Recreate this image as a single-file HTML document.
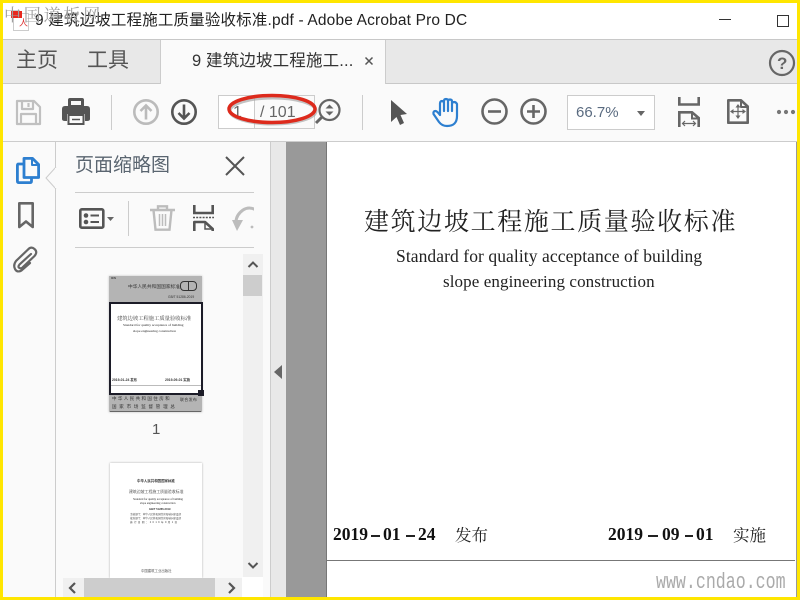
<!DOCTYPE html>
<html><head><meta charset="utf-8"><style>
html,body{margin:0;padding:0}
body{width:800px;height:600px;position:relative;overflow:hidden;background:#fff;font-family:"Liberation Sans","Noto Sans CJK SC",sans-serif;color:#333}
.a{position:absolute}
.t{position:absolute;white-space:nowrap;line-height:1}
svg{position:absolute;overflow:visible}
.serif{font-family:"Liberation Serif","Noto Serif CJK SC",serif;color:#222}
.song{font-family:"Noto Serif CJK SC","Liberation Serif",serif}
.bl{filter:blur(.35px)}
.d{position:absolute;top:526px;font:bold 17.5px/1 "Liberation Serif",serif;color:#111;white-space:nowrap}
.dash{position:absolute;height:2px;background:#222;top:535px}
</style></head><body>

<!-- title bar -->
<div class="t" style="left:35px;top:13px;font-size:15.5px;color:#222;letter-spacing:.16px">9 建筑边坡工程施工质量验收标准.pdf - Adobe Acrobat Pro DC</div>
<div class="a" style="left:13px;top:13px;width:14px;height:16px;background:#fff;border:1px solid #ccc"></div>
<div class="a" style="left:11px;top:11px;width:11px;height:7px;background:#e8281e"></div>
<div class="t" style="left:19px;top:19px;font-size:9px;color:#d33">人</div>
<div class="t song" style="left:4px;top:5px;font-size:17px;color:#a0a0a0;letter-spacing:2.800px">中国道板网</div>
<div class="a" style="left:719px;top:19px;width:12px;height:1px;background:#333"></div>
<div class="a" style="left:777px;top:15px;width:10px;height:10px;border:1px solid #333"></div>

<!-- tab bar -->
<div class="a" style="left:0;top:39px;width:800px;height:45px;background:#e8e8e8;border-top:1px solid #c8c8c8;border-bottom:1px solid #c8c8c8;box-sizing:border-box"></div>
<div class="a" style="left:160px;top:40px;width:226px;height:44px;background:#fafafa;border-left:1px solid #ccc;border-right:1px solid #ccc;box-sizing:border-box"></div>
<div class="t" style="left:16px;top:50px;font-size:21px;color:#555">主页</div>
<div class="t" style="left:87px;top:50px;font-size:21px;color:#555">工具</div>
<div class="t" style="left:192px;top:53px;font-size:16.500px;color:#333;letter-spacing:.15px">9 建筑边坡工程施工...</div>
<svg style="left:364px;top:56px" width="10" height="10"><path d="M1.500 1.500L8.500 8.500M8.500 1.500L1.500 8.500" stroke="#555" stroke-width="1.500"/></svg>
<svg style="left:769px;top:50px" width="26" height="26"><circle cx="13" cy="13" r="12" fill="none" stroke="#666" stroke-width="2.200"/></svg>
<div class="t" style="left:777px;top:55px;font-size:17px;font-weight:bold;color:#666">?</div>

<!-- toolbar -->
<div class="a" style="left:0;top:84px;width:800px;height:57px;background:#fafafa"></div>
<div class="a" style="left:0;top:141px;width:800px;height:1px;background:#ccc"></div>
<svg style="left:16px;top:100px" width="25" height="25" fill="none" stroke="#c0c0c0" stroke-width="2.200" stroke-linejoin="round"><path d="M1 1H18L24 7V24H1Z"/><path d="M6 1V9H17V1M12.500 3V7M5 24V14H20V24"/></svg>
<svg style="left:62px;top:98px" width="28" height="27"><path d="M6 8V2Q6 0 8 0H20Q22 0 22 2V8Z" fill="#555"/><path d="M3 8H25Q28 8 28 11V21Q28 23 25 23H23V16H5V23H3Q0 23 0 21V11Q0 8 3 8Z" fill="#555"/><path d="M6.500 17H21.500V26H6.500Z" fill="#fafafa" stroke="#555" stroke-width="2"/><path d="M10 21.500H18" stroke="#555" stroke-width="1.500"/><path d="M9 3H19V7H9Z" fill="#fafafa"/></svg>
<div class="a" style="left:111px;top:95px;width:1px;height:35px;background:#ccc"></div>
<svg style="left:133px;top:99px" width="26" height="26" fill="none" stroke="#bbb" stroke-width="2.600"><circle cx="13" cy="13" r="11.700"/><path d="M13 20.500V6.500M7.500 12L13 6.500L18.500 12"/></svg>
<svg style="left:171px;top:99px" width="26" height="26" fill="none" stroke="#555" stroke-width="2.600"><circle cx="13" cy="13" r="11.700"/><path d="M13 5.500V19.500M7.500 14L13 19.500L18.500 14"/></svg>
<div class="a" style="left:218px;top:95px;width:37px;height:34px;background:#fff;border:1px solid #ccc;box-sizing:border-box"></div>
<div class="a" style="left:255px;top:95px;width:60px;height:34px;background:#fafafa;border:1px solid #ccc;border-left:0;box-sizing:border-box"></div>
<div class="t" style="left:233px;top:105px;font-size:16px;color:#666">1</div>
<div class="t" style="left:260px;top:105px;font-size:16px;color:#666">/ 101</div>
<svg style="left:225px;top:88px" width="95" height="40"><ellipse cx="48" cy="23" rx="43" ry="13" fill="none" stroke="#aaa" stroke-width="3" opacity=".7"/><ellipse cx="47" cy="21" rx="43" ry="13.500" fill="none" stroke="#dd2a1c" stroke-width="3.500"/></svg>
<svg style="left:314px;top:98px" width="28" height="28"><circle cx="15.500" cy="12" r="10" fill="none" stroke="#666" stroke-width="2.200"/><path d="M11.500 10.500L15.500 6.500L19.500 10.500ZM11.500 13.500L15.500 17.500L19.500 13.500Z" fill="#666"/><path d="M8 19L2 25" stroke="#666" stroke-width="3"/></svg>
<div class="a" style="left:362px;top:95px;width:1px;height:35px;background:#ccc"></div>
<svg style="left:390px;top:100px" width="18" height="26"><path d="M1 0L17 14L10.500 15L14 23L10 25L6.500 17L1 22Z" fill="#555"/></svg>
<svg style="left:432px;top:98px" width="28" height="30" fill="none" stroke="#2d7fd0" stroke-width="2.200" stroke-linejoin="round" stroke-linecap="round"><path d="M8 17V5.500Q8 3 10 3T12 5.500V13M12 13V3Q12 1 14 1T16 3V13M16 13V3.500Q16 1.500 18 1.500T20 3.500V13M20 13V6Q20 4 22 4T25 6V18Q25 28 15 28Q10 28 7 24L1.500 16Q1 13 3.500 13Q5 13 8 17"/></svg>
<svg style="left:481px;top:98px" width="27" height="27" fill="none" stroke="#666" stroke-width="2.600"><circle cx="13.500" cy="13.500" r="12"/><path d="M7 13.500H20"/></svg>
<svg style="left:520px;top:98px" width="27" height="27" fill="none" stroke="#666" stroke-width="2.600"><circle cx="13.500" cy="13.500" r="12"/><path d="M7 13.500H20M13.500 7V20"/></svg>
<div class="a" style="left:567px;top:95px;width:88px;height:35px;background:#fff;border:1px solid #ccc;box-sizing:border-box"></div>
<div class="t" style="left:576px;top:105px;font-size:15px;color:#5a6b80">66.7%</div>
<div class="a" style="left:637px;top:111px;border-left:4px solid transparent;border-right:4px solid transparent;border-top:5px solid #666"></div>
<svg style="left:678px;top:97px" width="22" height="30" fill="none" stroke="#666" stroke-width="2.600"><path d="M1.300 0V7.500H20.700V0"/><path d="M1.300 30V15.300H14L20.700 21V30"/><path d="M14 16V21.500H20" stroke-width="2"/><path d="M4.500 26.500H17.500M7 24L4.500 26.500L7 29M15 24L17.500 26.500L15 29" stroke-width="1.200"/></svg>
<svg style="left:727px;top:99px" width="22" height="25" fill="none" stroke="#666" stroke-width="2.600" stroke-linejoin="round"><path d="M1.300 1.300H14L20.700 7.500V23.700H1.300Z"/><path d="M14 2V8H20" stroke-width="2"/><path d="M11 7V18M5.500 12.500H16.500" stroke-width="1.200"/><path d="M8.500 8.500L11 5L13.500 8.500ZM8.500 16.500L11 20L13.500 16.500ZM6.500 10L3 12.500L6.500 15ZM15.500 10L19 12.500L15.500 15Z" fill="#666" stroke="none"/></svg>
<svg style="left:776px;top:109px" width="20" height="6"><circle cx="3" cy="3" r="2.100" fill="#777"/><circle cx="10" cy="3" r="2.100" fill="#777"/><circle cx="17" cy="3" r="2.100" fill="#777"/></svg>

<!-- left rail + panel -->
<div class="a" style="left:0;top:142px;width:270px;height:458px;background:#fafafa"></div>
<div class="a" style="left:55px;top:142px;width:1px;height:458px;background:#ccc"></div>
<svg style="left:45px;top:167px" width="12" height="22"><path d="M11 0L1 11L11 22" fill="#fafafa" stroke="#ccc"/><path d="M11 1V21" stroke="#fafafa" stroke-width="2"/></svg>
<svg style="left:16px;top:157px" width="24" height="27" fill="none" stroke="#2d7fd0" stroke-width="2.800" stroke-linejoin="round"><path d="M8 1.400H16.500L22.600 7.500V20.500H8Z"/><path d="M16 2V8H22" stroke-width="2"/><path d="M7 7H2.500Q1.400 7 1.400 8.500V24Q1.400 25.600 3 25.600H14Q15.500 25.600 15.500 24V21"/></svg>
<svg style="left:18px;top:202px" width="16" height="27" fill="none" stroke="#666" stroke-width="2.600" stroke-linejoin="round"><path d="M1.300 1.300H14.700V25L8 19.500L1.300 25Z"/></svg>
<svg style="left:13px;top:247px" width="25" height="25" fill="none" stroke="#666" stroke-width="2.200" stroke-linecap="round"><path d="M18 7L6.500 17.500Q4.500 20 6.500 21T10 20L21.500 9Q25 5 21.500 2T15 2.500L3 14Q0 18 2 22T8.500 23.500L17 16"/></svg>

<div class="t" style="left:75px;top:156px;font-size:19px;color:#5a6570">页面缩略图</div>
<svg style="left:225px;top:156px" width="20" height="20"><path d="M1 1L19 19M19 1L1 19" stroke="#555" stroke-width="2"/></svg>
<div class="a" style="left:75px;top:192px;width:179px;height:1px;background:#ccc"></div>
<svg style="left:79px;top:208px" width="35" height="21"><rect x="1.300" y="1.300" width="23" height="18.400" rx="1.500" fill="none" stroke="#555" stroke-width="2.600"/><circle cx="7" cy="7.500" r="2.300" fill="#555"/><circle cx="7" cy="14" r="2.300" fill="#555"/><path d="M11.500 7.500H20M11.500 14H20" stroke="#555" stroke-width="2"/><path d="M28 9H35L31.500 13Z" fill="#666"/></svg>
<div class="a" style="left:128px;top:201px;width:1px;height:35px;background:#ccc"></div>
<svg style="left:150px;top:205px" width="25" height="26" fill="none" stroke="#bcbcbc" stroke-width="2.400"><path d="M0 5H25M8 5V1.300H17V5"/><path d="M3.500 5L5.500 24.700H19.500L21.500 5"/><path d="M9.500 9V21M12.500 9V21M15.500 9V21" stroke-width="1.500"/></svg>
<svg style="left:193px;top:205px" width="21" height="26" fill="none" stroke="#555" stroke-width="2.600"><path d="M1.300 0V8H19.700V0"/><path d="M1.300 26V17H12L19.700 24V26" stroke-linejoin="round"/><path d="M12 17.500V24H19" stroke-width="1.500"/><path d="M0 12.500H21" stroke-width="1.600" stroke-dasharray="2 1.200"/></svg>
<svg style="left:233px;top:207px" width="24" height="25" fill="none" stroke="#bcbcbc" stroke-width="3"><path d="M23 3Q16 -1 10 3Q3 8 3 15"/><path d="M-1 13H10L4 24Z" fill="#bcbcbc" stroke="none"/><circle cx="19" cy="20" r="1.400" fill="#bcbcbc" stroke="none"/></svg>
<div class="a" style="left:254px;top:200px;width:8px;height:36px;background:#fafafa"></div>
<div class="a" style="left:75px;top:247px;width:179px;height:1px;background:#ccc"></div>

<!-- thumbnail 1 -->
<div class="a" style="left:109px;top:276px;width:93px;height:136px;background:#b4b4b4;box-shadow:0 0 2px #bbb"></div>
<div class="a" style="left:109px;top:302px;width:94px;height:93px;background:#fff;border:2px solid #1c1c28;box-sizing:border-box"></div>
<div class="a" style="left:198px;top:390px;width:6px;height:6px;background:#1c1c28"></div>
<div class="a" style="left:110px;top:411px;width:91px;height:1px;background:#666"></div>
<div class="bl">
<div class="t" style="left:111px;top:277px;font-size:3px;color:#333;font-weight:bold">ICS</div>
<div class="t" style="left:128px;top:285px;font-size:4.700px;color:#333;letter-spacing:.04px">中华人民共和国国家标准</div>
<div class="a" style="left:180px;top:281px;width:17px;height:10px;border:1.500px solid #333;border-radius:4px;box-sizing:border-box"></div>
<div class="a" style="left:188px;top:281px;width:1px;height:10px;background:#333"></div>
<div class="t" style="left:168px;top:296px;font-size:3.300px;color:#333">GB/T 51286-2019</div>
<div class="t song" style="left:117px;top:316px;font-size:5.300px;color:#333">建筑边坡工程施工质量验收标准</div>
<div class="t serif" style="left:123px;top:324px;font-size:3.500px">Standard for quality acceptance of building</div>
<div class="t serif" style="left:133px;top:330px;font-size:3.500px">slope engineering construction</div>
<div class="t" style="left:112px;top:379px;font-size:3.400px;font-weight:bold;color:#333">2019-01-24 发布</div>
<div class="t" style="left:165px;top:379px;font-size:3.400px;font-weight:bold;color:#333">2019-09-01 实施</div>
<div class="a" style="left:111px;top:385px;width:90px;height:1px;background:#bbb"></div>
<div class="t" style="left:112px;top:396.500px;font-size:4.500px;color:#333;letter-spacing:1.400px">中华人民共和国住房和</div>
<div class="t" style="left:112px;top:404.500px;font-size:4.500px;color:#333;letter-spacing:2.800px">国家市场监督管理总</div>
<div class="t" style="left:180px;top:398px;font-size:4px;color:#333;letter-spacing:.3px">联合发布</div>
</div>
<div class="t" style="left:152px;top:422px;font-size:15px;color:#555">1</div>

<!-- thumbnail 2 -->
<div class="a" style="left:110px;top:463px;width:92px;height:115px;background:#fff;box-shadow:0 0 2px #aaa"></div>
<div class="bl">
<div class="t" style="left:137px;top:480px;font-size:3.450px;color:#333;font-weight:bold">中华人民共和国国家标准</div>
<div class="t" style="left:129px;top:490px;font-size:3.900px;color:#555">建筑边坡工程施工质量验收标准</div>
<div class="t serif" style="left:133px;top:497.500px;font-size:2.900px">Standard for quality acceptance of building</div>
<div class="t serif" style="left:140px;top:502px;font-size:2.900px">slope engineering construction</div>
<div class="t" style="left:149px;top:508.500px;font-size:2.700px;font-weight:bold;color:#333">GB/T 51286-2019</div>
<div class="t" style="left:130px;top:513.500px;font-size:2.550px;color:#444">主编部门：中华人民共和国住房和城乡建设部</div>
<div class="t" style="left:130px;top:518px;font-size:2.550px;color:#444">批准部门：中华人民共和国住房和城乡建设部</div>
<div class="t" style="left:130px;top:522px;font-size:2.550px;color:#444;letter-spacing:1.400px">施行日期：2019年9月1日</div>
<div class="t" style="left:141px;top:570px;font-size:3.400px;color:#555">中国建筑工业出版社</div>
</div>

<!-- scrollbars -->
<div class="a" style="left:243px;top:254px;width:20px;height:323px;background:#f0f0f0"></div>
<div class="a" style="left:243px;top:275px;width:19px;height:21px;background:#cdcdcd"></div>
<svg style="left:247px;top:260px" width="12" height="8"><path d="M1.500 7L6 2.500L10.500 7" fill="none" stroke="#555" stroke-width="2"/></svg>
<svg style="left:247px;top:562px" width="12" height="8"><path d="M1.500 1L6 5.500L10.500 1" fill="none" stroke="#555" stroke-width="2"/></svg>
<div class="a" style="left:63px;top:578px;width:179px;height:19px;background:#f0f0f0"></div>
<div class="a" style="left:84px;top:578px;width:131px;height:19px;background:#cdcdcd"></div>
<svg style="left:68px;top:582px" width="9" height="12"><path d="M7 1L2 6L7 11" fill="none" stroke="#555" stroke-width="2.200"/></svg>
<svg style="left:227px;top:582px" width="9" height="12"><path d="M2 1L7 6L2 11" fill="none" stroke="#555" stroke-width="2.200"/></svg>
<div class="a" style="left:242px;top:577px;width:21px;height:20px;background:#fff"></div>

<!-- splitter -->
<div class="a" style="left:270px;top:142px;width:16px;height:458px;background:#e8e8e8;border-left:1px solid #ccc;box-sizing:border-box"></div>
<div class="a" style="left:274px;top:365px;border-top:7px solid transparent;border-bottom:7px solid transparent;border-right:8px solid #666"></div>

<!-- document -->
<div class="a" style="left:286px;top:142px;width:40px;height:458px;background:#999"></div>
<div class="a" style="left:326px;top:142px;width:471px;height:458px;background:#fff;border-left:1px solid #777;border-right:1px solid #999;box-sizing:border-box"></div>
<div class="t song" style="left:364px;top:208px;font-size:25px;color:#222;letter-spacing:1.650px;font-weight:400;filter:blur(.25px)">建筑边坡工程施工质量验收标准</div>
<div class="t serif" style="left:396px;top:248px;font-size:17.500px;letter-spacing:.08px;filter:blur(.25px)">Standard for quality acceptance of building</div>
<div class="t serif" style="left:443px;top:273px;font-size:17px;letter-spacing:.1px;filter:blur(.25px)">slope engineering construction</div>

<div class="d" style="left:333px">2019</div><div class="dash" style="left:371px;width:9px"></div>
<div class="d" style="left:383px">01</div><div class="dash" style="left:406px;width:9px"></div>
<div class="d" style="left:418px">24</div>
<div class="t song" style="left:455px;top:526px;font-size:16.500px;color:#222">发布</div>
<div class="d" style="left:608px">2019</div><div class="dash" style="left:648px;width:10px"></div>
<div class="d" style="left:662px">09</div><div class="dash" style="left:685px;width:8px"></div>
<div class="d" style="left:696px">01</div>
<div class="t song" style="left:733px;top:526px;font-size:16.500px;color:#222">实施</div>

<div class="a" style="left:327px;top:560px;width:468px;height:1px;background:#777"></div>
<div class="t" style="left:656px;top:572px;font-size:22px;color:#aaa;font-family:'Liberation Mono',monospace;transform:scaleX(.755);transform-origin:left top">www.cndao.com</div>

<!-- yellow frame -->
<div class="a" style="left:0;top:0;width:800px;height:600px;border-style:solid;border-color:#ffe600;border-width:3px;box-sizing:border-box"></div>
</body></html>
